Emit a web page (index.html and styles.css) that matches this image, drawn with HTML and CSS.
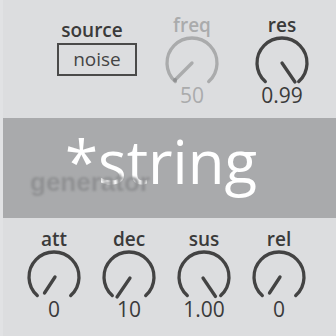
FILE: index.html
```html
<!DOCTYPE html>
<html lang="en">
<head>
    <meta charset="UTF-8">
    <meta name="viewport" content="width=device-width, initial-scale=1.0">
    <title>*string</title>
    <link rel="stylesheet" href="styles.css">
</head>
<body>

    <div class="panel">
        <div class="row top-row">
            <div class="control source">
                <span class="label source-label">source</span>
                <div class="menu">noise</div>
            </div>

            <div class="control knob off">
                <span class="label">freq</span>
                <svg class="dial" viewBox="0 0 56 50">
                    <path d="M11.27 45.58 A25 25 0 1 1 44.73 45.58" />
                    <line x1="28" y1="27" x2="11" y2="44" />
                    <circle class="dot" cx="11" cy="44" r="2" />
                </svg>
                <span class="value">50</span>
            </div>

            <div class="control knob">
                <span class="label">res</span>
                <svg class="dial" viewBox="0 0 56 50">
                    <path d="M11.27 45.58 A25 25 0 1 1 44.73 45.58" />
                    <line x1="28" y1="27" x2="41" y2="46" />
                </svg>
                <span class="value">0.99</span>
            </div>
        </div>

        <div class="band">
            <span class="section-name">generator</span>
            <span class="title">*string</span>
        </div>

        <div class="row bottom-row">
            <div class="control knob">
                <span class="label">att</span>
                <svg class="dial" viewBox="0 0 56 50">
                    <path d="M11.27 45.58 A25 25 0 1 1 44.73 45.58" />
                    <line x1="29" y1="27" x2="18.5" y2="43" />
                </svg>
                <span class="value">0</span>
            </div>

            <div class="control knob">
                <span class="label">dec</span>
                <svg class="dial" viewBox="0 0 56 50">
                    <path d="M11.27 45.58 A25 25 0 1 1 44.73 45.58" />
                    <line x1="29" y1="28" x2="16" y2="47" />
                </svg>
                <span class="value">10</span>
            </div>

            <div class="control knob">
                <span class="label">sus</span>
                <svg class="dial" viewBox="0 0 56 50">
                    <path d="M11.27 45.58 A25 25 0 1 1 44.73 45.58" />
                    <line x1="27" y1="28" x2="39.5" y2="46.5" />
                </svg>
                <span class="value">1.00</span>
            </div>

            <div class="control knob">
                <span class="label">rel</span>
                <svg class="dial" viewBox="0 0 56 50">
                    <path d="M11.27 45.58 A25 25 0 1 1 44.73 45.58" />
                    <line x1="29" y1="27" x2="18.5" y2="43" />
                </svg>
                <span class="value">0</span>
            </div>
        </div>
    </div>

</body>
</html>
```

FILE: styles.css
```css
body {
    margin: 0;
    padding: 0;
    background-color: #dcdddf;
    font-family: "Open Sans", "DejaVu Sans", sans-serif;
    color: #3a3a3a;
}

.panel {
    width: 336px;
    height: 336px;
    overflow: hidden;
    box-sizing: border-box;
    border-left: 3px solid #e1e2e4;
}

.row {
    display: flex;
}

.top-row {
    height: 118px;
    padding-left: 54px;
    box-sizing: border-box;
}

.bottom-row {
    padding-left: 23px;
    gap: 19px;
}

.control {
    display: flex;
    flex-direction: column;
    align-items: center;
}

.label {
    font-size: 19px;
    font-weight: 600;
    line-height: 20px;
}

.value {
    font-size: 21px;
    font-weight: 500;
    line-height: 20px;
    margin-top: -1px;
}

/* source menu */
.source {
    width: 80px;
    padding-top: 20px;
}

.source-label {
    padding-right: 10px;
}

.menu {
    box-sizing: border-box;
    width: 80px;
    height: 33px;
    margin-top: 3px;
    border: 2px solid #4a4a4a;
    font-size: 19px;
    font-weight: 500;
    line-height: 28px;
    text-align: center;
    color: #444;
}

/* dials */
.knob {
    width: 56px;
}

.top-row .knob {
    padding-top: 15px;
}

.top-row .off {
    margin-left: 27px;
    margin-right: 34px;
}

.dial {
    width: 56px;
    height: 50px;
    margin-top: 1px;
    fill: none;
    stroke: #434343;
    stroke-width: 3.3;
    stroke-linecap: round;
}

.off {
    color: #aaabac;
}

.off .dial {
    stroke: #aaabac;
}

.dial .dot {
    fill: #8f9092;
    stroke: none;
}

/* overlay band */
.band {
    height: 100px;
    margin-left: -3px;
    background-color: #a9aaac;
    display: grid;
    align-items: center;
}

.section-name {
    grid-area: 1 / 1;
    margin: 28px 0 0 30px;
    font-family: "Liberation Sans", sans-serif;
    font-size: 26px;
    font-weight: bold;
    color: #909193;
    filter: blur(0.9px);
}

.title {
    grid-area: 1 / 1;
    margin: 0 0 14px 65px;
    font-size: 60px;
    font-weight: 500;
    color: #ffffff;
}

.bottom-row .knob {
    padding-top: 11px;
}
```
